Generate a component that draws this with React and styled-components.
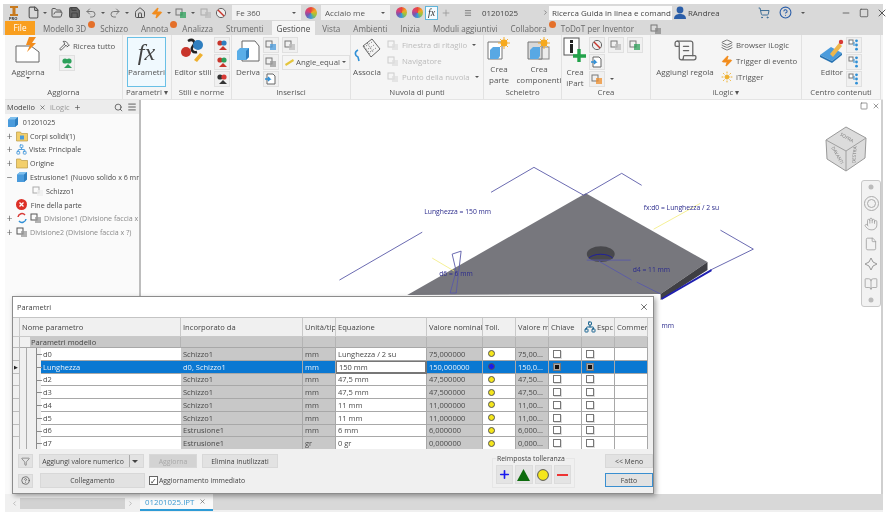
import React from 'react';
import styled, { createGlobalStyle } from 'styled-components';
import { File, FolderOpen, Save, Undo2, Redo2, House, Zap, Minus, Square, X, Plus, Search, Menu, ShoppingCart, CircleHelp, Hand, Hammer, ScrollText, Sun, Layers, Network, Filter, BookOpen, ChevronLeft, ChevronRight } from 'lucide-react';

const GlobalStyle = createGlobalStyle`
  html, body { margin: 0; padding: 0; background: #fff; }
  * { box-sizing: border-box; }
`;

const Page = styled.div`
  position: relative;
  width: 886px;
  height: 512px;
  overflow: hidden;
  background: #fff;
  padding: 4px 3px 0 5px;
  display: flex;
  flex-direction: column;
  font-family: "Open Sans", "Noto Sans", sans-serif;
  font-size: 8px;
  color: #444;
  filter: blur(0.35px);
`;

/* title bar */
const QuickBar = styled.div`
  height: 17px;
  margin-left: -2px;
  background: #d9d9d9;
  display: flex;
  align-items: center;
  flex: none;
`;
const Slot = styled.span`
  flex: none;
  width: ${p => p.$w || 16}px;
  height: 15px;
  display: flex;
  align-items: center;
  justify-content: center;
  color: ${p => p.$c || '#555'};
`;
const Caret = styled.span`
  flex: none;
  width: ${p => p.$w || 8}px;
  display: flex;
  justify-content: center;
  &::after {
    content: '';
    border-top: 2px solid #555;
    border-left: 2px solid transparent;
    border-right: 2px solid transparent;
  }
`;
const Combo = styled.div`
  flex: none;
  width: 69px;
  height: 15px;
  margin: 0 3px;
  padding: 0 3px 0 4px;
  background: #f2f2f2;
  display: flex;
  align-items: center;
  justify-content: space-between;
  font-size: 8px;
  color: #555;
`;
const Wheel = styled.span`
  flex: none;
  width: ${p => p.$s || 12}px;
  height: ${p => p.$s || 12}px;
  border-radius: 50%;
  background: conic-gradient(#e8483c, #f5a623, #9bc53d, #3a9bd9, #7a55b0, #d9417a, #e8483c);
`;
const FxButton = styled.span`
  flex: none;
  width: 13px;
  height: 14px;
  border: 1px solid #5fb4d9;
  background: #f4fbff;
  font: italic 10px "Liberation Serif", serif;
  text-align: center;
  line-height: 12px;
  color: #333;
`;
const DocName = styled.span`
  flex: none;
  width: 59px;
  font-size: 7.9px;
  color: #444;
`;
const SearchInput = styled.div`
  flex: none;
  width: 123px;
  height: 14px;
  padding-left: 3px;
  background: #fafafa;
  font-size: 8px;
  line-height: 14px;
  white-space: nowrap;
  overflow: hidden;
`;
const UserName = styled.span`
  flex: none;
  width: 68px;
  font-size: 7.9px;
`;

/* tabs */
const TabBar = styled.div`
  height: 14px;
  margin-left: -2px;
  padding-left: 2px;
  background: #d9d9d9;
  display: flex;
  align-items: stretch;
  flex: none;
`;
const FileTab = styled.div`
  width: 30px;
  margin-right: 8px;
  background: #f99f1f;
  color: #fff;
  text-align: center;
  line-height: 14px;
  font-size: 8.2px;
`;
const Tab = styled.div`
  flex: none;
  padding: 0 ${p => p.$active ? 5 : 0}px;
  margin-right: ${p => p.$active ? 7 : p.$dot ? 2 : 13}px;
  margin-left: ${p => p.$active ? -5 : 0}px;
  background: ${p => p.$active ? '#f5f5f5' : 'transparent'};
  color: ${p => p.$active ? '#444' : '#6a6a6a'};
  font-size: 8.1px;
  line-height: 15px;
`;
const OrangeDot = styled.span`
  flex: none;
  width: 7px;
  height: 7px;
  margin: 0 5px 0 0;
  align-self: flex-start;
  border-radius: 50%;
  background: #e4702a;
`;

/* ribbon */
const Ribbon = styled.div`
  height: 65px;
  flex: none;
  background: #f5f5f5;
  display: flex;
  border-bottom: 1px solid #e4e4e4;
`;
const Group = styled.div`
  flex: none;
  width: ${p => p.$w}px;
  border-right: 1px solid #e2e2e2;
  display: flex;
  flex-direction: column;
`;
const GroupBody = styled.div`
  flex: 1;
  min-height: 0;
  padding: 2px 0 0 ${p => p.$pad || 0}px;
  display: flex;
  gap: ${p => p.$gap || 3}px;
  justify-content: ${p => p.$center ? 'center' : 'flex-start'};
`;
const GroupLabel = styled.div`
  height: 14px;
  text-align: center;
  font-size: 7.8px;
  line-height: 14px;
  color: #555;
  white-space: nowrap;
`;
const BigButton = styled.div`
  flex: none;
  width: ${p => p.$w || 40}px;
  display: flex;
  flex-direction: column;
  align-items: center;
  text-align: center;
  line-height: 11px;
  font-size: 8px;
  color: #555;
  white-space: nowrap;
`;
const BigIcon = styled.div`
  height: 27px;
  margin-bottom: 2px;
  display: flex;
  align-items: center;
  justify-content: center;
`;
const FxPanel = styled.div`
  width: 39px;
  height: 50px;
  margin: 0 0 0 4px;
  border: 1px solid #69c0e6;
  background: #f0f9fe;
  text-align: center;
  font-size: 8px;
  color: #555;
`;
const FxBig = styled.div`
  height: 28px;
  font: italic 24px/29px "Liberation Serif", serif;
  color: #444;
`;
const Stack = styled.div`
  display: flex;
  flex-direction: column;
  gap: ${p => p.$gap || 1}px;
  flex: none;
`;
const SmallBox = styled.span`
  flex: none;
  width: 16px;
  height: 16px;
  border: 1px solid #e0e0e0;
  background: #f0f0f0;
  display: flex;
  align-items: center;
  justify-content: center;
  color: #555;
`;
const SmallRow = styled.div`
  display: flex;
  align-items: center;
  gap: 3px;
  height: 17px;
  font-size: 7.8px;
  color: ${p => p.$off ? '#bbb' : '#555'};
  white-space: nowrap;
`;
const StyleCombo = styled.div`
  width: 68px;
  height: 15px;
  padding: 0 2px;
  border: 1px solid #e0e0e0;
  display: flex;
  align-items: center;
  gap: 2px;
  font-size: 7.8px;
`;

/* main area */
const Main = styled.div`
  flex: 1;
  min-height: 0;
  display: flex;
`;
const Browser = styled.div`
  width: 136px;
  flex: none;
  background: #fafafa;
  border-right: 2px solid #bdbdbd;
`;
const BrowserHead = styled.div`
  height: 14px;
  padding: 0 2px;
  background: #ececec;
  display: flex;
  align-items: center;
  gap: 4px;
  font-size: 7.4px;
`;
const HeadTab = styled.span`
  color: ${p => p.$dim ? '#999' : '#444'};
`;
const HeadSearch = styled.span`
  margin-left: auto;
  display: flex;
`;
const Tree = styled.div`
  padding-top: 1px;
`;
const TreeRow = styled.div`
  height: 13.8px;
  padding-left: ${p => p.$indent || 0}px;
  display: flex;
  align-items: center;
  gap: 2px;
  white-space: nowrap;
  overflow: hidden;
  font-size: 7.1px;
  color: ${p => p.$dim ? '#8a8a8a' : '#4a4a4a'};
  svg { flex: none; }
`;
const Expander = styled.span`
  flex: none;
  width: 9px;
  text-align: center;
  font-size: 10px;
  line-height: 10px;
  color: #666;
`;
const Viewport = styled.div`
  position: relative;
  flex: 1;
  background: #fff;
  border-right: 2px solid #cfcfcf;
`;
const Drawing = styled.svg`
  display: block;
  width: 100%;
  height: 100%;
`;
const PanelControls = styled.div`
  position: absolute;
  top: 2px;
  right: 1px;
  display: flex;
  gap: 4px;
  color: #666;
`;
const ViewCube = styled.svg`
  position: absolute;
  top: 26px;
  right: 14px;
`;
const NavBar = styled.div`
  position: absolute;
  top: 80px;
  right: 0;
  width: 20px;
  height: 127px;
  padding: 3px 0;
  border: 1px solid #c8c8c8;
  border-radius: 3px;
  background: #f2f2f2;
  display: flex;
  flex-direction: column;
  align-items: center;
  justify-content: space-between;
  color: #999;
`;

/* bottom document tabs */
const DocBar = styled.div`
  height: 18px;
  flex: none;
  background: #f0f0f0;
  display: flex;
  color: #999;
`;
const DocScroll = styled.div`
  width: 135px;
  padding: 0 6px;
  display: flex;
  align-items: center;
  gap: 2px;
`;
const DocThumb = styled.div`
  flex: 1;
  height: 11px;
  background: #d2d2d2;
`;
const DocTab = styled.div`
  width: 73px;
  height: 17px;
  padding-left: 5px;
  border-bottom: 2px solid #2e9bd6;
  background: #fafafa;
  display: flex;
  align-items: center;
  gap: 5px;
  color: #3d9ad1;
  font-size: 7.9px;
`;
const DocRest = styled.div`
  flex: 1;
  height: 16px;
  background: #d8d8d8;
`;

/* parameters dialog */
const Dialog = styled.div`
  position: absolute;
  left: 12px;
  top: 296px;
  width: 642px;
  height: 198px;
  background: #f0f0f0;
  border: 1px solid #8c8c8c;
  box-shadow: 2px 2px 5px rgba(0, 0, 0, .35);
  display: flex;
  flex-direction: column;
`;
const DialogTitle = styled.div`
  height: 20px;
  padding: 0 4px;
  background: #fff;
  display: flex;
  align-items: center;
  justify-content: space-between;
  font-size: 7.4px;
  color: #444;
`;
const Table = styled.div`
  height: 132px;
  overflow: hidden;
  background: #f0f0f0;
  border-top: 1px solid #c4c4c4;
`;
const COLUMNS = '7px 161px 122px 33px 91px 56px 33px 33px 33px 33px 33px 4px';
const Row = styled.div`
  display: grid;
  grid-template-columns: ${COLUMNS};
  height: ${p => p.$h}px;
`;
const HeadCell = styled.div`
  padding-left: 2px;
  border-right: 1px solid #c9c9c9;
  border-bottom: 1px solid #c9c9c9;
  display: flex;
  align-items: center;
  gap: 1px;
  overflow: hidden;
  white-space: nowrap;
  font-size: 7.6px;
  color: #444;
  svg { flex: none; }
`;
const Marker = styled.div`
  border-right: 1px solid #bcbcbc;
  border-bottom: 1px solid #bcbcbc;
  background: #f0f0f0;
  color: #222;
  font-size: 5px;
  line-height: 12px;
  text-align: center;
`;
const GroupCell = styled.div`
  background: #c8c8c8;
  border-right: 1px solid #b4b4b4;
  border-bottom: 1px solid #a8a8a8;
`;
const GroupName = styled(GroupCell)`
  background: linear-gradient(90deg, #f0f0f0 10px, #c8c8c8 10px);
  padding-left: 11px;
  font-size: 7.5px;
  line-height: 10px;
  color: #444;
`;
const Cell = styled.div`
  padding-left: 2px;
  border-right: 1px solid #a8a8a8;
  border-bottom: 1.5px solid #a8a8a8;
  background: ${p => p.$sel ? '#0a78d2' : p.$ro ? '#c8c8c8' : '#fff'};
  color: ${p => p.$sel ? '#e8f2fb' : '#4a4a4a'};
  display: flex;
  align-items: center;
  overflow: hidden;
  white-space: nowrap;
  font-size: 7.5px;
`;
const EditCell = styled(Cell)`
  background: #fff;
  color: #444;
  border: 1px solid #777;
  border-width: 1px 2px 2px 1px;
`;
const NameCell = styled.div`
  position: relative;
  padding-left: 21px;
  display: flex;
`;
const NameText = styled(Cell)`
  flex: 1;
  border-right: 0;
`;
const TreeLine = styled.span`
  position: absolute;
  left: 16px;
  top: 0;
  bottom: 0;
  width: 5px;
  border-left: 1px solid #8a8a8a;
  &::after {
    content: '';
    position: absolute;
    left: 0;
    top: 6px;
    width: 5px;
    border-top: 1px solid #8a8a8a;
  }
  &::before {
    content: '';
    position: absolute;
    left: -11px;
    top: 0;
    bottom: 0;
    border-left: 1px solid #aaa;
  }
`;
const Dot = styled.span`
  width: 7px;
  height: 7px;
  margin-left: 3px;
  border-radius: 50%;
  background: ${p => p.$c};
  border: 1px solid #555;
`;
const Check = styled.span`
  width: 8px;
  height: 8px;
  margin-left: 2px;
  border: 1px solid #777;
  background: ${p => p.$on ? '#111' : '#fff'};
  box-shadow: ${p => p.$on ? 'inset 0 0 0 1px #aaa' : '1px 1px 0 #ddd'};
`;
const DialogFoot = styled.div`
  flex: 1;
  padding: 5px 0 5px 5px;
  display: grid;
  grid-template-columns: 474px 1fr 48px;
  font-size: 6.9px;
`;
const FootLeft = styled.div`
  display: flex;
  flex-direction: column;
  justify-content: space-between;
`;
const FootRow = styled.div`
  display: flex;
  align-items: center;
  gap: ${p => p.$gap || 5}px;
`;
const WinButton = styled.div`
  flex: none;
  width: ${p => p.$w}px;
  height: ${p => p.$h || 14}px;
  margin-left: ${p => p.$ml || 0}px;
  border: 1px solid ${p => p.$primary ? '#3a8fd0' : '#d8d8d8'};
  background: ${p => p.$off ? '#d3d3d3' : '#e2e2e2'};
  color: ${p => p.$off ? '#a8a8a8' : '#444'};
  display: flex;
  align-items: center;
  justify-content: center;
  white-space: nowrap;
`;
const Split = styled.span`
  width: 12px;
  align-self: stretch;
  margin-left: 5px;
  border-left: 1px solid #aaa;
  display: flex;
  align-items: center;
  justify-content: center;
  &::after {
    content: '';
    border-top: 3px solid #444;
    border-left: 3px solid transparent;
    border-right: 3px solid transparent;
  }
`;
const CheckLabel = styled.label`
  display: flex;
  align-items: center;
  gap: 1px;
`;
const Tick = styled.span`
  width: 9px;
  height: 9px;
  border: 1px solid #666;
  background: #fff;
  color: #333;
  font-size: 8px;
  line-height: 7px;
  text-align: center;
`;
const Tolerance = styled.div`
  align-self: end;
  width: 83px;
  height: 30px;
  padding: 6px 3px 0;
  border: 1px solid #e6e6e6;
  position: relative;
  display: flex;
  gap: 2px;
`;
const Legend = styled.span`
  position: absolute;
  left: 3px;
  top: -5px;
  padding: 0 1px;
  background: #f0f0f0;
  line-height: 9px;
  white-space: nowrap;
`;
const TolButton = styled.span`
  width: 18px;
  height: 19px;
  border: 1px solid #dcdcdc;
  background: #e4e4e4;
  display: flex;
  align-items: center;
  justify-content: center;
`;
const FootRight = styled.div`
  display: flex;
  flex-direction: column;
  gap: 5px;
`;

const TABS = [['Modello 3D', true], ['Schizzo'], ['Annota', true], ['Analizza'], ['Strumenti'], ['Gestione', false, true], ['Vista'], ['Ambienti'], ['Inizia'], ['Moduli aggiuntivi'], ['Collabora', true], ['ToDoT per Inventor']];

const PARAMS = [
  ['d0', 'Schizzo1', 'mm', 'Lunghezza / 2 su', '75,000000', '75,00...'],
  ['Lunghezza', 'd0, Schizzo1', 'mm', '150 mm', '150,000000', '150,0...'],
  ['d2', 'Schizzo1', 'mm', '47,5 mm', '47,500000', '47,50...'],
  ['d3', 'Schizzo1', 'mm', '47,5 mm', '47,500000', '47,50...'],
  ['d4', 'Schizzo1', 'mm', '11 mm', '11,000000', '11,00...'],
  ['d5', 'Schizzo1', 'mm', '11 mm', '11,000000', '11,00...'],
  ['d6', 'Estrusione1', 'mm', '6 mm', '6,000000', '6,000...'],
  ['d7', 'Estrusione1', 'gr', '0 gr', '0,000000', '0,000...'],
];

const Inventor = () => (
  <svg width="12" height="15" viewBox="0 0 12 15">
    <path d="M2 1h8v2H7.5v6H10v2H2V9h2.5V3H2z" fill="#c87a1e" />
    <text x="1" y="14.5" fontSize="4" fontWeight="700" fill="#333">PRO</text>
  </svg>
);
const Folder = ({ fill = '#f3cf6b', inner }) => (
  <svg width="12" height="12" viewBox="0 0 12 12">
    <path d="M.5 2h4l1 1.5h6V11H.5z" fill={fill} stroke="#b99a45" strokeWidth=".7" />
    {inner && <rect x="4" y="5.5" width="4" height="4" fill={inner} />}
  </svg>
);
const Solid = ({ size = 12 }) => (
  <svg width={size} height={size} viewBox="0 0 12 12">
    <path d="M1 3.5 4 1h7v7.5L8 11H1z" fill="#4a9bdc" />
    <path d="M8 11V3.5H1L4 1h7v7.5z" fill="#7fc0ee" />
    <path d="M8 11V3.5L11 1v7.5z" fill="#2f7fc0" />
  </svg>
);
const DocBolt = () => (
  <svg width="30" height="27" viewBox="0 0 30 27">
    <path d="M3 9h15l8 6v10H3z" fill="#fff" stroke="#666" />
    <path d="M16 0h7l-4 6h4l-9 9 3-7h-4z" fill="#f28c1c" />
  </svg>
);
const DeriveIcon = () => (
  <svg width="24" height="24" viewBox="0 0 24 24">
    <path d="M6 2h13l4 5v15H6z" fill="#fff" stroke="#666" />
    <path d="M1 12l3-3h9v9l-3 3H1z" fill="#5aaee8" />
    <path d="M10 21v-9l3-3v9z" fill="#2f7fc0" />
  </svg>
);
const StylesIcon = () => (
  <svg width="26" height="26" viewBox="0 0 26 26">
    <path d="M8 3c5-3 8 1 5 5s0 7 4 6" fill="none" stroke="#222" strokeWidth="2.5" />
    <circle cx="6" cy="14" r="5" fill="#c8352b" />
    <circle cx="18" cy="7" r="5" fill="#2f7fc0" />
    <path d="M14 22l6-7 3 2-6 7z" fill="#eeb02f" />
  </svg>
);
const Assoc = () => (
  <svg width="28" height="27" viewBox="0 0 28 27">
    <path d="M10 9 19 2l8 10-9 8z" fill="#f4f4f4" stroke="#666" />
    <path d="M13 9l6-4M15 12l6-4M17 15l6-4M14 6l6 9M11 9l6 8" stroke="#888" strokeDasharray="1.5 1.5" fill="none" />
    <path d="M5 13c-4 2-3 6 0 7l1 4" fill="none" stroke="#2f8fd6" strokeWidth="1.6" />
  </svg>
);
const NewPart = ({ two }) => (
  <svg width="24" height="24" viewBox="0 0 24 24">
    {two && <rect x="12" y="10" width="10" height="12" fill="#ececec" stroke="#888" />}
    <path d="M1 5h14v17H1z" fill={two ? '#d8d8d8' : '#fff'} stroke="#777" />
    <path d="M3 13l3-3h7v9l-2 3H3z" fill="#58a8e4" />
    <circle cx="17" cy="6" r="3.4" fill="#f6a91d" />
    <path d="M17 0v12M11 6h12M13 2l8 8M21 2l-8 8" stroke="#f6a91d" strokeWidth=".9" />
  </svg>
);
const InfoPlus = () => (
  <svg width="24" height="27" viewBox="0 0 24 27">
    <rect x="1" y="1" width="15" height="17" fill="#fff" stroke="#555" />
    <rect x="7" y="3" width="3" height="3" fill="#222" />
    <rect x="7" y="7" width="3" height="9" fill="#222" />
    <path d="M16 12v13M10 19h13" stroke="#22a24a" strokeWidth="3.4" />
  </svg>
);
const EditorIcon = () => (
  <svg width="26" height="24" viewBox="0 0 26 24">
    <path d="M1 16 12 8l11 6-10 8z" fill="#4a9bdc" />
    <path d="M1 16v2l12 6 10-8v-2L13 22z" fill="#2673b3" />
    <path d="M11 15 20 4l3 3-9 11z" fill="#eeb64c" />
    <circle cx="22" cy="3" r="2.2" fill="#d83a36" />
  </svg>
);
const Mini = ({ c1 = '#4a9bdc', c2 = '#777', kind = 'a' }) => (
  <svg width="12" height="12" viewBox="0 0 12 12">
    {kind === 'a' && <><rect x="1" y="2" width="6" height="6" fill="none" stroke={c2} /><rect x="5" y="5" width="6" height="6" fill={c1} opacity=".75" /></>}
    {kind === 'b' && <><circle cx="4" cy="4" r="2.6" fill={c2} /><circle cx="8" cy="4" r="2.6" fill={c1} /><path d="M3 11l4-4 4 4z" fill={c2 === '#777' ? '#bbb' : c2} /></>}
    {kind === 'c' && <><circle cx="6" cy="6" r="4.6" fill="#eee" stroke="#666" /><path d="M3 3l6 6" stroke="#c8352b" strokeWidth="1.4" /></>}
    {kind === 'd' && <><path d="M2 1h6l2 2v8H2z" fill="#fff" stroke="#666" /><path d="M0 6h5l-2-2M5 6 3 8" stroke="#2f8fd6" fill="none" strokeWidth="1.3" /></>}
    {kind === 'e' && <><rect x="1" y="1" width="4" height="4" fill="#fff" stroke="#777" /><circle cx="8.5" cy="6" r="1.4" fill={c1} /><circle cx="8.5" cy="1.8" r="1.4" fill={c1} /><circle cx="8.5" cy="10.2" r="1.4" fill={c1} /><path d="M5 4h2M5 6h2" stroke={c1} /></>}
  </svg>
);

const Param = ({ p, selected }) => (
  <Row $h={12.75}>
    <Marker>{selected ? '▶' : ''}</Marker>
    <NameCell>
      <TreeLine />
      <NameText $sel={selected}>{p[0]}</NameText>
    </NameCell>
    <Cell $ro $sel={selected}>{p[1]}</Cell>
    <Cell $ro $sel={selected}>{p[2]}</Cell>
    {selected ? <EditCell>{p[3]}</EditCell> : <Cell>{p[3]}</Cell>}
    <Cell $ro $sel={selected}>{p[4]}</Cell>
    <Cell $sel={selected}><Dot $c={selected ? '#1a1aee' : '#f5e61c'} /></Cell>
    <Cell $ro $sel={selected}>{p[5]}</Cell>
    <Cell $sel={selected}><Check $on={selected} /></Cell>
    <Cell $sel={selected}><Check $on={selected} /></Cell>
    <Cell $sel={selected} />
    <div />
  </Row>
);

export default function App() {
  return (
    <Page>
      <GlobalStyle />
      <QuickBar>
        <Slot $w={22}><Inventor /></Slot>
        <Slot $w={16}><File size={13} /></Slot>
        <Caret />
        <Slot $w={16}><FolderOpen size={12} /></Slot>
        <Slot $w={18}><Save size={13} fill="#666" color="#444" /></Slot>
        <Slot $w={16}><Undo2 size={12} color="#777" /></Slot>
        <Caret />
        <Slot $w={16}><Redo2 size={12} color="#777" /></Slot>
        <Caret />
        <Slot $w={18}><House size={12} /></Slot>
        <Slot $w={15}><Zap size={12} color="#f28c1c" fill="#f28c1c" /></Slot>
        <Caret $w={10} />
        <Slot $w={14}><Mini kind="a" c1="#2ca05a" /></Slot>
        <Caret $w={10} />
        <Slot $w={15}><Mini kind="a" c1="#bbb" c2="#aaa" /></Slot>
        <Slot $w={16}><Mini kind="c" /></Slot>
        <Combo>Fe 360<Caret /></Combo>
        <Slot $w={14}><Wheel /></Slot>
        <Combo>Acciaio me<Caret /></Combo>
        <Slot $w={16}><Wheel $s={11} /></Slot>
        <Slot $w={16}><Wheel $s={11} /></Slot>
        <FxButton>fx</FxButton>
        <Slot $w={15} $c="#999"><Plus size={10} /></Slot>
        <Slot $w={29}><Menu size={8} /></Slot>
        <DocName>01201025</DocName>
        <Slot $w={8}><ChevronRight size={7} /></Slot>
        <SearchInput>Ricerca Guida in linea e comand</SearchInput>
        <Slot $w={16} $c="#2b5ea8"><svg width="12" height="13" viewBox="0 0 12 13"><circle cx="6" cy="4" r="3.4" fill="#2b5ea8" /><path d="M0 13c0-4 3-5 6-5s6 1 6 5z" fill="#2b5ea8" /></svg></Slot>
        <UserName>RAndrea</UserName>
        <Slot $w={16} $c="#3f6f97"><ShoppingCart size={12} /></Slot>
        <Slot $w={27} $c="#2b5ea8"><CircleHelp size={13} /></Slot>
        <Caret />
        <Slot $w={30} />
        <Slot $w={18}><Minus size={10} /></Slot>
        <Slot $w={18}><Square size={10} /></Slot>
        <Slot $w={18}><X size={12} /></Slot>
      </QuickBar>

      <TabBar>
        <FileTab>File</FileTab>
        {TABS.map(([name, dot, active]) => (
          <React.Fragment key={name}>
            <Tab $dot={dot} $active={active}>{name}</Tab>
            {dot && <OrangeDot />}
          </React.Fragment>
        ))}
        <Slot $w={18}><Mini kind="a" c1="#888" /></Slot>
      </TabBar>

      <Ribbon>
        <Group $w={118}>
          <GroupBody $gap={8}>
            <BigButton $w={46}>
              <BigIcon><DocBolt /></BigIcon>
              Aggiorna
              <Caret />
            </BigButton>
            <Stack>
              <SmallRow><Hammer size={11} />Ricrea tutto</SmallRow>
              <SmallBox><Mini kind="b" c1="#2ca05a" c2="#2ca05a" /></SmallBox>
            </Stack>
          </GroupBody>
          <GroupLabel>Aggiorna</GroupLabel>
        </Group>
        <Group $w={49}>
          <GroupBody>
            <FxPanel>
              <FxBig>fx</FxBig>
              Parametri
            </FxPanel>
          </GroupBody>
          <GroupLabel>Parametri ▾</GroupLabel>
        </Group>
        <Group $w={60}>
          <GroupBody $gap={2} $pad={2}>
            <BigButton $w={38}>
              <BigIcon><StylesIcon /></BigIcon>
              Editor stili
            </BigButton>
            <Stack $gap={1}>
              <SmallBox><Mini kind="b" c1="#2f7fc0" c2="#c8352b" /></SmallBox>
              <SmallBox><Mini kind="b" c1="#2ca05a" c2="#c8352b" /></SmallBox>
              <SmallBox><Mini kind="b" c1="#d83a36" c2="#333" /></SmallBox>
            </Stack>
          </GroupBody>
          <GroupLabel>Stili e norme</GroupLabel>
        </Group>
        <Group $w={119}>
          <GroupBody $gap={1} $pad={2}>
            <BigButton $w={28}>
              <BigIcon><DeriveIcon /></BigIcon>
              Deriva
            </BigButton>
            <Stack $gap={1}>
              <SmallRow><SmallBox><Mini kind="a" /></SmallBox><SmallBox><Mini kind="a" c1="#bbb" /></SmallBox></SmallRow>
              <SmallRow>
                <SmallBox><Mini kind="a" c1="#999" /></SmallBox>
                <StyleCombo><svg width="9" height="7" viewBox="0 0 9 7"><path d="M0 5 8 0l1 2-8 5z" fill="#e4c53c" /></svg>Angle_equal<Caret $w={5} /></StyleCombo>
              </SmallRow>
              <SmallRow><SmallBox><Mini kind="d" /></SmallBox></SmallRow>
            </Stack>
          </GroupBody>
          <GroupLabel>Inserisci</GroupLabel>
        </Group>
        <Group $w={133}>
          <GroupBody $gap={4}>
            <BigButton $w={32}>
              <BigIcon><Assoc /></BigIcon>
              Associa
            </BigButton>
            <Stack $gap={0}>
              <SmallRow $off><Mini kind="a" c1="#ddd" c2="#ccc" />Finestra di ritaglio <Caret /></SmallRow>
              <SmallRow $off><Mini kind="a" c1="#ddd" c2="#ccc" />Navigatore</SmallRow>
              <SmallRow $off><Mini kind="a" c1="#ddd" c2="#ccc" />Punto della nuvola <Caret /></SmallRow>
            </Stack>
          </GroupBody>
          <GroupLabel>Nuvola di punti</GroupLabel>
        </Group>
        <Group $w={78}>
          <GroupBody $gap={0}>
            <BigButton $w={30}><BigIcon><NewPart /></BigIcon>Crea<br />parte</BigButton>
            <BigButton $w={44}><BigIcon><NewPart two /></BigIcon>Crea<br />componenti</BigButton>
          </GroupBody>
          <GroupLabel>Scheletro</GroupLabel>
        </Group>
        <Group $w={89}>
          <GroupBody $gap={1}>
            <BigButton $w={26}><BigIcon><InfoPlus /></BigIcon>Crea<br />iPart</BigButton>
            <Stack $gap={1}>
              <SmallRow>
                <SmallBox><Mini kind="c" /></SmallBox>
                <SmallBox><Mini kind="a" c1="#bbb" /></SmallBox>
                <SmallBox><Mini kind="a" c1="#2ca05a" /></SmallBox>
              </SmallRow>
              <SmallRow><SmallBox><Mini kind="d" /></SmallBox></SmallRow>
              <SmallRow><SmallBox><Mini kind="a" c1="#ee8d2c" /></SmallBox><Caret /></SmallRow>
            </Stack>
          </GroupBody>
          <GroupLabel>Crea</GroupLabel>
        </Group>
        <Group $w={151}>
          <GroupBody $gap={5} $pad={3}>
            <BigButton $w={62}><BigIcon><ScrollText size={25} strokeWidth={1.2} color="#666" /></BigIcon>Aggiungi regola</BigButton>
            <Stack $gap={0}>
              <SmallRow><Layers size={12} color="#777" />Browser iLogic</SmallRow>
              <SmallRow><Zap size={12} color="#f28c1c" fill="#f28c1c" />Trigger di evento</SmallRow>
              <SmallRow><Sun size={12} color="#eeb02f" fill="#eeb02f" />iTrigger</SmallRow>
            </Stack>
          </GroupBody>
          <GroupLabel>iLogic ▾</GroupLabel>
        </Group>
        <Group $w={79}>
          <GroupBody $gap={2} $center>
            <BigButton $w={24}><BigIcon><EditorIcon /></BigIcon>Editor</BigButton>
            <Stack $gap={1}>
              <SmallBox><Mini kind="e" c1="#2f8fd6" /></SmallBox>
              <SmallBox><Mini kind="e" c1="#2f8fd6" /></SmallBox>
              <SmallBox><Mini kind="e" c1="#2f8fd6" /></SmallBox>
            </Stack>
          </GroupBody>
          <GroupLabel>Centro contenuti</GroupLabel>
        </Group>
      </Ribbon>

      <Main>
        <Browser>
          <BrowserHead>
            <HeadTab>Modello</HeadTab> <X size={7} /> <HeadTab $dim>iLogic</HeadTab> <Plus size={7} />
            <HeadSearch><Search size={9} /></HeadSearch>
            <Menu size={10} />
          </BrowserHead>
          <Tree>
            <TreeRow $indent={2}><Solid />&nbsp;01201025</TreeRow>
            <TreeRow><Expander>+</Expander><Folder inner="#4a9bdc" />Corpi solidi(1)</TreeRow>
            <TreeRow><Expander>+</Expander><Network size={11} color="#4a9bdc" />Vista: Principale</TreeRow>
            <TreeRow><Expander>+</Expander><Folder />Origine</TreeRow>
            <TreeRow><Expander>−</Expander><Solid />Estrusione1 (Nuovo solido x 6 mm</TreeRow>
            <TreeRow $indent={27}><Mini kind="a" c1="#eee" c2="#aaa" />Schizzo1</TreeRow>
            <TreeRow $indent={11}><svg width="11" height="11" viewBox="0 0 11 11"><circle cx="5.5" cy="5.5" r="5.5" fill="#dc3027" /><path d="M3.5 3.5l4 4M7.5 3.5l-4 4" stroke="#fff" strokeWidth="1.3" /></svg>&nbsp;Fine della parte</TreeRow>
            <TreeRow $dim><Expander>+</Expander><svg width="12" height="12" viewBox="0 0 12 12"><path d="M2 5a4 4 0 0 1 7-2" fill="none" stroke="#d83a36" strokeWidth="1.5" /><path d="M10 7a4 4 0 0 1-7 2" fill="none" stroke="#2f8fd6" strokeWidth="1.5" /></svg><Mini kind="a" c1="#999" c2="#555" />Divisione1 (Divisione faccia x ?</TreeRow>
            <TreeRow $dim><Expander>+</Expander><Mini kind="a" c1="#999" c2="#555" />Divisione2 (Divisione faccia x ?)</TreeRow>
          </Tree>
        </Browser>
        <Viewport>
          <Drawing viewBox="141 100 742 394">
            <path d="M408 295 587 193 709 262 662 294z" fill="#77777d" />
            <path d="M662 294 709 262v8l-47 30z" fill="#3f3f44" />
            <ellipse cx="602" cy="254" rx="14" ry="8" fill="#48484c" />
            <path d="M590 258a14 8 0 0 1 24 0" fill="none" stroke="#1f1f9e" />
            <g fill="none" stroke="#5a5aa8" strokeWidth=".9">
              <path d="M492 192 535 167 585 195" />
              <path d="M585 195 623 173 643 185" />
              <path d="M340 280 423 232" />
              <path d="M722 230 755 249 712 270" />
              <path d="M588 260H632M600 261l33 19M638 282l24 12" />
              <path d="M453 254l9-3-5 42-6 0 6-22z" />
            </g>
            <path d="M663 299 713 270" stroke="#1f1fb0" strokeWidth="2" />
            <path d="M655 229 702 203M433 258 455 271" stroke="#f2ec7a" strokeWidth=".8" />
            <g fill="#2b2b8c" fontFamily="Open Sans, sans-serif" fontSize="6.8">
              <text x="425" y="214">Lunghezza = 150 mm</text>
              <text x="645" y="210">fx:d0 = Lunghezza / 2 su</text>
              <text x="634" y="272">d4 = 11 mm</text>
              <text x="440" y="276">d6 = 6 mm</text>
              <text x="663" y="328">mm</text>
            </g>
          </Drawing>
          <PanelControls><Square size={8} /><X size={8} /></PanelControls>
          <ViewCube width="42" height="46" viewBox="0 0 42 46">
            <path d="M1 14 21 1l20 11-1 20-19 13L2 33z" fill="#dcdcdc" stroke="#999" />
            <path d="M1 14 21 25l20-13M21 25v20" fill="none" stroke="#a0a0a0" />
            <g fontSize="4.6" fill="#777" textAnchor="middle">
              <text transform="translate(21 13) rotate(30)">SOPRA</text>
              <text transform="translate(11 30) rotate(60)">DAVANTI</text>
              <text transform="translate(31 29) rotate(-85)">DESTRA</text>
            </g>
          </ViewCube>
          <NavBar>
            <svg width="6" height="6"><circle cx="3" cy="3" r="2.5" fill="#bbb" /></svg>
            <svg width="15" height="15" viewBox="0 0 15 15"><circle cx="7.5" cy="7.5" r="7" fill="none" stroke="#aaa" /><circle cx="7.5" cy="7.5" r="4" fill="none" stroke="#aaa" /></svg>
            <Hand size={14} strokeWidth={1.3} />
            <File size={14} strokeWidth={1.3} />
            <svg width="14" height="14" viewBox="0 0 14 14"><path d="M7 1 9 5l4 2-4 2-2 4-2-4-4-2 4-2z" fill="none" stroke="#999" /></svg>
            <BookOpen size={14} strokeWidth={1.3} />
            <svg width="6" height="6"><circle cx="3" cy="3" r="2.5" fill="#bbb" /></svg>
          </NavBar>
        </Viewport>
      </Main>

      <DocBar>
        <DocScroll>
          <ChevronLeft size={7} />
          <DocThumb />
          <ChevronRight size={7} />
        </DocScroll>
        <DocTab>01201025.IPT <X size={7} color="#555" /></DocTab>
        <DocRest />
      </DocBar>

      <Dialog>
        <DialogTitle>
          Parametri
          <X size={10} color="#555" />
        </DialogTitle>
        <Table>
          <Row $h={19}>
            <HeadCell />
            <HeadCell>Nome parametro</HeadCell>
            <HeadCell>Incorporato da</HeadCell>
            <HeadCell>Unità/tip</HeadCell>
            <HeadCell>Equazione</HeadCell>
            <HeadCell>Valore nominale</HeadCell>
            <HeadCell>Toll.</HeadCell>
            <HeadCell>Valore m</HeadCell>
            <HeadCell>Chiave</HeadCell>
            <HeadCell><Network size={12} color="#17628f" />Espc</HeadCell>
            <HeadCell>Commer</HeadCell>
            <div />
          </Row>
          <Row $h={11}>
            <Marker />
            <GroupName>Parametri modello</GroupName>
            <GroupCell /><GroupCell /><GroupCell /><GroupCell /><GroupCell /><GroupCell /><GroupCell /><GroupCell /><GroupCell />
            <div />
          </Row>
          {PARAMS.map((p, i) => <Param key={p[0]} p={p} selected={i === 1} />)}
        </Table>
        <DialogFoot>
          <FootLeft>
            <FootRow>
              <WinButton $w={15}><Filter size={9} color="#777" /></WinButton>
              <WinButton $w={105} $ml={1}>Aggiungi valore numerico<Split /></WinButton>
              <WinButton $w={48} $off>Aggiorna</WinButton>
              <WinButton $w={76}>Elimina inutilizzati</WinButton>
            </FootRow>
            <FootRow $gap={4}>
              <WinButton $w={15}><CircleHelp size={9} color="#555" /></WinButton>
              <WinButton $w={105} $h={15} $ml={3}>Collegamento</WinButton>
              <CheckLabel><Tick>✓</Tick>Aggiornamento immediato</CheckLabel>
            </FootRow>
          </FootLeft>
          <Tolerance>
            <Legend>Reimposta tolleranza</Legend>
            <TolButton><Plus size={13} color="#1a1aee" strokeWidth={3} /></TolButton>
            <TolButton><svg width="13" height="12" viewBox="0 0 13 12"><path d="M6.5 0 13 12H0z" fill="#0d6b0d" /></svg></TolButton>
            <TolButton><svg width="12" height="12" viewBox="0 0 12 12"><circle cx="6" cy="6" r="5.4" fill="#f5e61c" stroke="#555" /></svg></TolButton>
            <TolButton><svg width="11" height="2"><rect width="11" height="2" fill="#e33" /></svg></TolButton>
          </Tolerance>
          <FootRight>
            <WinButton $w={48}>{'<< Meno'}</WinButton>
            <WinButton $w={48} $primary>Fatto</WinButton>
          </FootRight>
        </DialogFoot>
      </Dialog>
    </Page>
  );
}
